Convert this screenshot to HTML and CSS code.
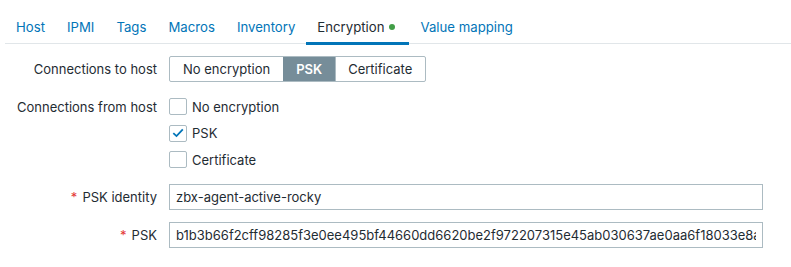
FILE: index.html
```html
<!DOCTYPE html>
<html>
<head>
<meta charset="utf-8">
<link rel="stylesheet" href="styles.css">
</head>
<body>
<div class="page">
  <nav class="tabs">
    <a class="tab">Host</a>
    <a class="tab">IPMI</a>
    <a class="tab">Tags</a>
    <a class="tab">Macros</a>
    <a class="tab">Inventory</a>
    <a class="tab active">Encryption<span class="dot"></span></a>
    <a class="tab">Value mapping</a>
  </nav>
  <div class="form">
    <div class="label row1">Connections to host</div>
    <div class="control row1">
      <div class="seg">
        <span class="seg-btn">No encryption</span>
        <span class="seg-btn on">PSK</span>
        <span class="seg-btn">Certificate</span>
      </div>
    </div>
    <div class="label cb-label">Connections from host</div>
    <div class="control checks">
      <label class="check"><span class="box"></span>No encryption</label>
      <label class="check"><span class="box"><svg viewBox="0 0 16 16" width="16" height="16"><path d="M3.3 8.1 L6.5 11.1 L12.8 4.4" fill="none" stroke="#0275b8" stroke-width="1.8"/></svg></span>PSK</label>
      <label class="check"><span class="box"></span>Certificate</label>
    </div>
    <div class="label field-label first"><span class="req">*</span>PSK identity</div>
    <div class="control field first"><input class="text" type="text" value="zbx-agent-active-rocky"></div>
    <div class="label field-label second"><span class="req">*</span>PSK</div>
    <div class="control field second"><input class="text" type="text" value="b1b3b66f2cff98285f3e0ee495bf44660dd6620be2f972207315e45ab030637ae0aa6f18033e8a4c"></div>
  </div>
</div>
</body>
</html>
```
FILE: styles.css
```css
* { box-sizing: border-box; }
html, body { margin: 0; padding: 0; background: #fff; }
body {
  font-family: Inter, "Noto Sans", sans-serif;
  font-size: 13px;
  color: #1f2c33;
}
.page { padding-top: 11px; }
.tabs {
  display: flex;
  margin-left: 5px;
  border-bottom: 1px solid #e1e6e9;
  height: 33px;
  font-size: 13.2px;
}
.tab {
  display: flex;
  align-items: center;
  padding: 0 11px 2px;
  color: #0275b8;
  height: 33px;
  position: relative;
}
.tab.active {
  color: #1f2c33;
  padding-right: 14px;
}
.tab.active::after {
  content: "";
  position: absolute;
  left: 0; right: 0; bottom: -1px;
  height: 3px;
  background: #0275b8;
}
.dot {
  display: inline-block;
  width: 6px; height: 6px;
  border-radius: 50%;
  background: #429e47;
  margin-left: 5px;
}
.form {
  display: grid;
  grid-template-columns: 157px 594px;
  column-gap: 12px;
  margin-top: 12px;
}
.label {
  text-align: right;
  display: flex;
  justify-content: flex-end;
  align-items: center;
}
.label.cb-label { height: 17px; margin-top: 16px; }
.row1 { height: 26px; }
.seg {
  display: inline-flex;
  border: 1px solid #acbbc2;
  border-radius: 2px;
  height: 26px;
}
.seg-btn {
  display: flex;
  align-items: center;
  padding: 0 12.5px;
  border-left: 1px solid #acbbc2;
}
.seg-btn:first-child { border-left: none; padding-left: 13px; }
.seg-btn.on {
  background: #768d99;
  color: #fff;
  font-weight: 600;
  border-left-color: #768d99;
}
.checks {
  display: flex;
  flex-direction: column;
  gap: 9.5px;
  margin-top: 16px;
}
.check {
  display: flex;
  align-items: center;
  height: 17px;
  gap: 5px;
}
.box {
  width: 18px; height: 17px;
  border: 1px solid #acbbc2;
  border-radius: 2px;
  display: flex;
  align-items: center;
  justify-content: center;
  background: #fff;
}
.field-label { height: 26px; }
.first { margin-top: 16px; }
.second { margin-top: 12px; }
.req { color: #e33734; margin-right: 5px; }
.text {
  width: 594px;
  height: 26px;
  border: 1px solid #acbbc2;
  border-radius: 0;
  padding: 0 6px;
  font: inherit;
  color: #1f2c33;
  outline: none;
  display: block;
}
```
